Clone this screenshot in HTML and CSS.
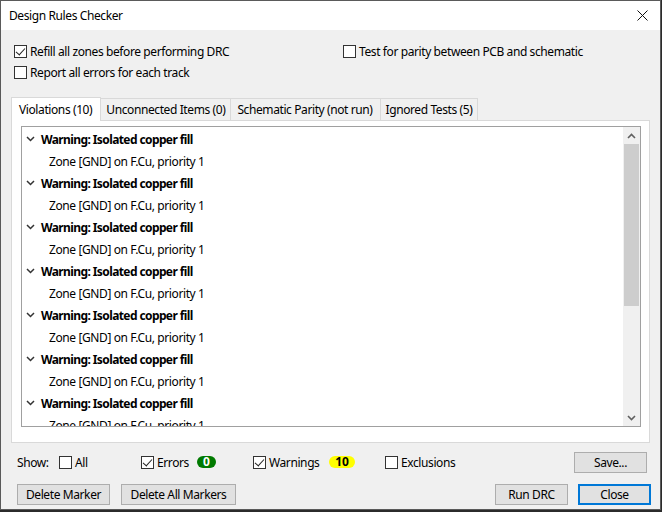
FILE: index.html
```html
<!DOCTYPE html>
<html lang="en">
<head>
    <meta charset="UTF-8">
    <title>Design Rules Checker</title>
    <link rel="stylesheet" href="styles.css">
</head>
<body>
    <div class="window">
        <div class="titlebar">
            <span class="title">Design Rules Checker</span>
            <svg class="close-x" width="11" height="11" viewBox="0 0 11 11"><path d="M0.5 0.5L10.5 10.5M10.5 0.5L0.5 10.5" stroke="#111" stroke-width="1"/></svg>
        </div>

        <div class="content">
            <div class="options">
                <div class="opt-col">
                    <label class="check"><span class="box checked"></span>Refill all zones before performing DRC</label>
                    <label class="check"><span class="box"></span>Report all errors for each track</label>
                </div>
                <div class="opt-col right">
                    <label class="check"><span class="box"></span>Test for parity between PCB and schematic</label>
                </div>
            </div>

            <div class="tabs">
                <div class="tab active">Violations (10)</div>
                <div class="tab">Unconnected Items (0)</div>
                <div class="tab wide">Schematic Parity (not run)</div>
                <div class="tab">Ignored Tests (5)</div>
            </div>

            <div class="panel">
                <div class="listbox">
                    <div class="rows" id="rows"></div>
                    <div class="scrollbar">
                        <div class="arrow up"><svg width="9" height="6" viewBox="0 0 9 6"><path d="M1 5L4.5 1.5L8 5" fill="none" stroke="#606060" stroke-width="1.6"/></svg></div>
                        <div class="track"><div class="thumb"></div></div>
                        <div class="arrow down"><svg width="9" height="6" viewBox="0 0 9 6"><path d="M1 1L4.5 4.5L8 1" fill="none" stroke="#606060" stroke-width="1.6"/></svg></div>
                    </div>
                </div>
            </div>

            <div class="show-row">
                <span class="show-label">Show:</span>
                <label class="check c-all"><span class="box"></span>All</label>
                <label class="check c-err"><span class="box checked"></span>Errors</label>
                <span class="badge green">0</span>
                <label class="check c-warn"><span class="box checked"></span>Warnings</label>
                <span class="badge yellow">10</span>
                <label class="check c-excl"><span class="box"></span>Exclusions</label>
                <button class="btn save">Save...</button>
            </div>

            <div class="button-row">
                <button class="btn b-del">Delete Marker</button>
                <button class="btn b-delall">Delete All Markers</button>
                <span class="spacer"></span>
                <button class="btn b-run">Run DRC</button>
                <button class="btn b-close">Close</button>
            </div>
        </div>
    </div>

    <script>
        // 7 violations fit in the visible part of the list
        const rows = document.getElementById('rows');
        for (let i = 0; i < 7; i++) {
            rows.innerHTML += `
                <div class="row warn">
                    <svg class="chev" width="9" height="6" viewBox="0 0 9 6"><path d="M1 1L4.5 4.5L8 1" fill="none" stroke="#333" stroke-width="1.5"/></svg>
                    <span>Warning: Isolated copper fill</span>
                </div>
                <div class="row item">Zone [GND] on F.Cu, priority 1</div>`;
        }
    </script>
</body>
</html>
```

FILE: styles.css
```css
* {
    box-sizing: border-box;
}
html, body {
    margin: 0;
    padding: 0;
    background-color: #2b2b2b;
}
body {
    font-family: 'Noto Sans', 'Open Sans', sans-serif;
    font-size: 12px;
    letter-spacing: -0.4px;
    color: #000;
    width: 662px;
    height: 512px;
    overflow: hidden;
}
.window {
    width: 661px;
    height: 510px;
    background-color: #f0f0f0;
    border: 1px solid #5a5a5a;
    display: flex;
    flex-direction: column;
}
.titlebar {
    height: 29px;
    background-color: #fff;
    display: flex;
    align-items: center;
    padding-left: 8px;
    padding-right: 12px;
    justify-content: space-between;
}
.title {
    color: #000;
}
.content {
    flex: 1;
    display: flex;
    flex-direction: column;
    padding: 0 9px 0 10px;
}
.check {
    display: flex;
    align-items: center;
    height: 21px;
    color: #000;
}
.box {
    width: 13px;
    height: 13px;
    border: 1px solid #333;
    background-color: #fff;
    margin-right: 3px;
    flex-shrink: 0;
    position: relative;
}
.box.checked::after {
    content: '';
    position: absolute;
    left: 3px;
    top: 0px;
    width: 4px;
    height: 8px;
    border-right: 1.3px solid #222;
    border-bottom: 1.3px solid #222;
    transform: rotate(42deg);
}
.options {
    display: flex;
    padding-top: 11px;
    padding-left: 3px;
}
.opt-col {
    width: 329px;
}
.opt-col.right {
    width: auto;
}
.tabs {
    display: flex;
    align-items: flex-end;
    margin-top: 13px;
    height: 24px;
    padding-left: 1px;
}
.tab {
    height: 22px;
    padding: 0 5px;
    border: 1px solid #d9d9d9;
    border-bottom: none;
    margin-left: -1px;
    display: flex;
    align-items: center;
    background-color: #f0f0f0;
}
.tab.wide {
    padding: 0 7px 0 6px;
}
.tab.active {
    height: 24px;
    background-color: #fff;
    margin-bottom: -1px;
    position: relative;
    z-index: 1;
    padding: 0 8px 0 7px;
}
.panel {
    height: 323px;
    background-color: #fff;
    border: 1px solid #d9d9d9;
    padding: 5px 8px 0 9px;
    width: 639px;
}
.listbox {
    height: 301px;
    border: 1px solid #a0a0a0;
    display: flex;
    overflow: hidden;
}
.rows {
    flex: 1;
    overflow: hidden;
    padding-top: 1px;
}
.row {
    height: 22px;
    display: flex;
    align-items: center;
    white-space: nowrap;
}
.row.warn {
    font-weight: bold;
    letter-spacing: -0.6px;
    padding-left: 4px;
}
.chev {
    margin-right: 6px;
}
.row.item {
    padding-left: 27px;
}
.scrollbar {
    width: 17px;
    display: flex;
    flex-direction: column;
    background-color: #f0f0f0;
}
.arrow {
    height: 17px;
    display: flex;
    align-items: center;
    justify-content: center;
}
.track {
    flex: 1;
}
.thumb {
    height: 162px;
    background-color: #cdcdcd;
    margin: 0 1px;
}
.show-row {
    display: flex;
    align-items: center;
    height: 22px;
    margin-top: 8px;
    padding-left: 6px;
}
.show-label {
    width: 42px;
}
.c-all { width: 82px; }
.c-err { width: 56px; }
.c-warn { width: 76px; }
.c-excl { margin-left: 30px; }
.badge {
    height: 12px;
    border-radius: 6px;
    font-weight: bold;
    font-size: 12px;
    letter-spacing: 0;
    display: flex;
    align-items: center;
    justify-content: center;
    line-height: 12px;
}
.badge.green {
    width: 19px;
    background-color: #007a00;
    color: #fff;
    margin-right: 37px;
}
.badge.yellow {
    width: 26px;
    background-color: #ffff00;
    color: #000;
}
.btn {
    font-family: inherit;
    font-size: 12px;
    letter-spacing: -0.4px;
    height: 21px;
    background-color: #e1e1e1;
    border: 1px solid #adadad;
    padding: 0;
    color: #000;
}
.save {
    margin-left: auto;
    width: 73px;
    margin-right: 4px;
}
.button-row {
    display: flex;
    align-items: center;
    margin-top: 11px;
    padding-left: 6px;
}
.b-del { width: 93px; }
.b-delall { width: 115px; margin-left: 11px; }
.spacer { flex: 1; }
.b-run { width: 73px; }
.b-close {
    width: 73px;
    margin-left: 10px;
    border: 2px solid #0078d7;
}
```
